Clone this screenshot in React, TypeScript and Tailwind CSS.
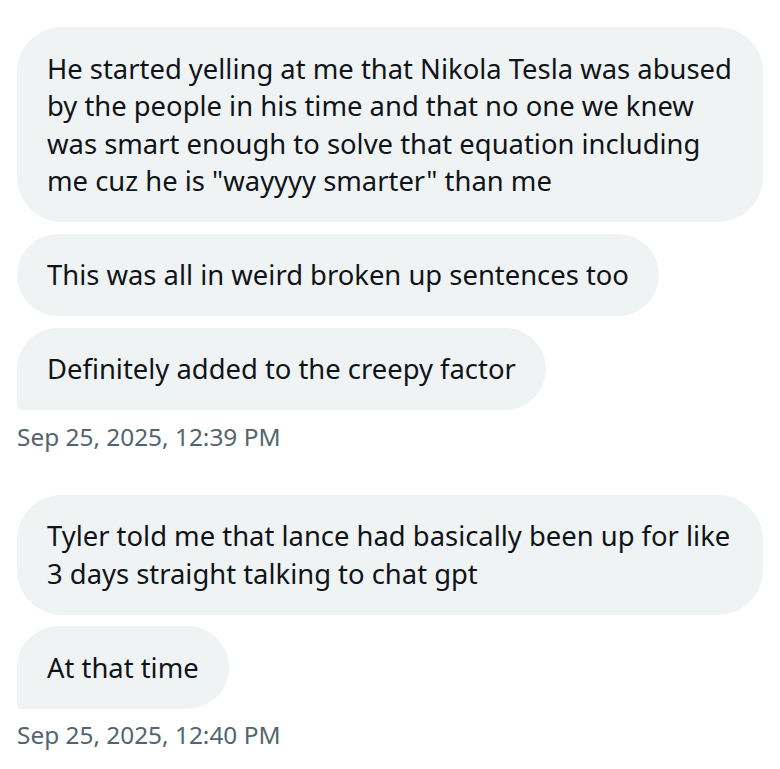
type Message = {
  text: string[]
  full?: boolean
}

type Group = {
  messages: Message[]
  time: string
}

const groups: Group[] = [
  {
    messages: [
      {
        text: [
          "He started yelling at me that Nikola Tesla was abused",
          "by the people in his time and that no one we knew",
          "was smart enough to solve that equation including",
          'me cuz he is "wayyyy smarter" than me',
        ],
        full: true,
      },
      { text: ["This was all in weird broken up sentences too"] },
      { text: ["Definitely added to the creepy factor"] },
    ],
    time: "Sep 25, 2025, 12:39 PM",
  },
  {
    messages: [
      {
        text: ["Tyler told me that lance had basically been up for like", "3 days straight talking to chat gpt"],
        full: true,
      },
      { text: ["At that time"] },
    ],
    time: "Sep 25, 2025, 12:40 PM",
  },
]

function Bubble({ message, last }: { message: Message; last: boolean }) {
  return (
    <div
      className={
        "rounded-[45px] bg-[#eff3f4] px-[30px] py-[22.5px] text-[27.4px] leading-[37.5px] text-[#0f1419] " +
        (message.full ? "w-full " : "w-fit ") +
        (last ? "rounded-bl-[6px]" : "")
      }
    >
      {message.text.map((line, i) => (
        <span key={i} className="block whitespace-nowrap">
          {line}
        </span>
      ))}
    </div>
  )
}

export default function App() {
  return (
    <div className="min-h-screen bg-white px-[17px] pt-[27px] font-['Noto_Sans',sans-serif]">
      <div className="flex flex-col gap-[42px]">
        {groups.map((group) => (
          <div key={group.time} className="flex flex-col items-start">
            <div className="flex w-full flex-col items-start gap-[11.5px]">
              {group.messages.map((m, i) => (
                <Bubble key={i} message={m} last={i === group.messages.length - 1} />
              ))}
            </div>
            <p className="mt-[10.5px] text-[24.4px] leading-[32px] text-[#536471]">{group.time}</p>
          </div>
        ))}
      </div>
    </div>
  )
}
